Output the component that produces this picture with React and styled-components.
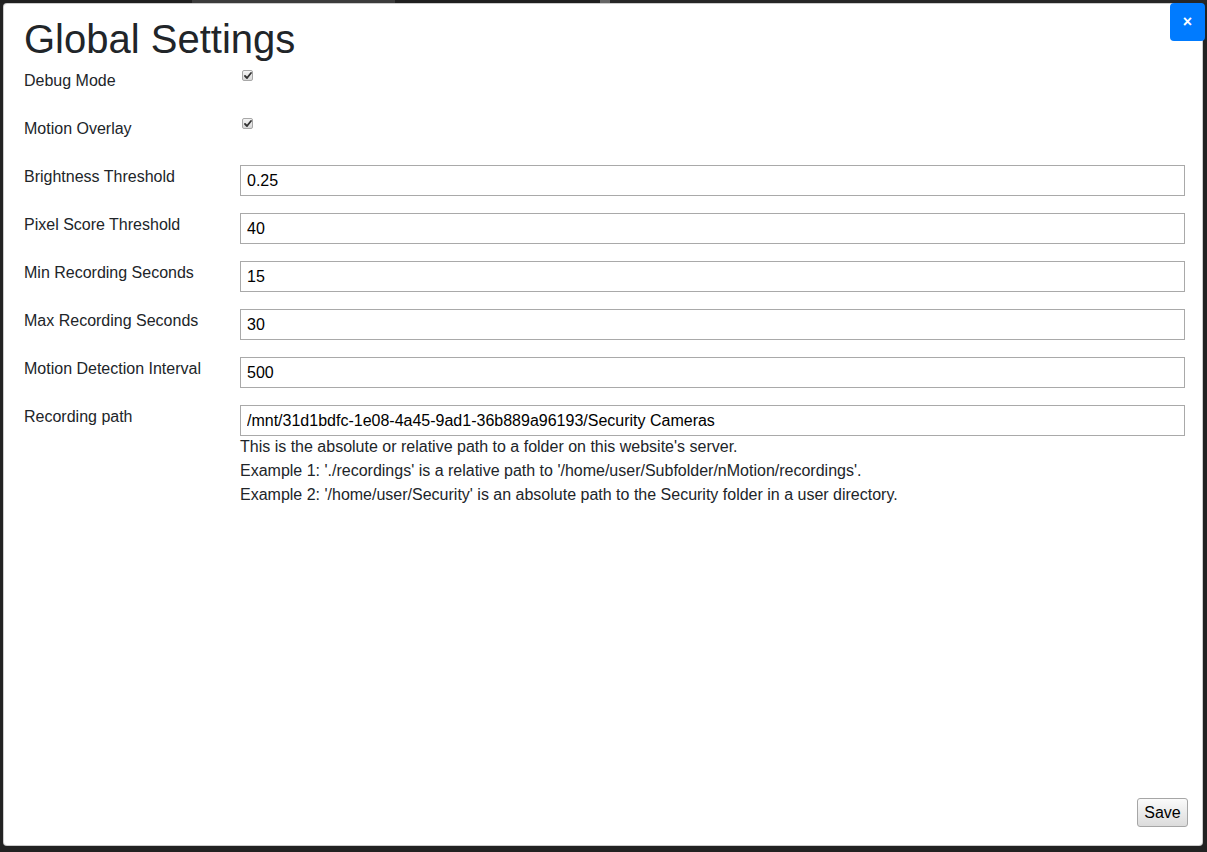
import React from "react";
import styled, { createGlobalStyle } from "styled-components";

const GlobalStyle = createGlobalStyle`
  html, body {
    margin: 0;
    padding: 0;
  }
  body {
    background-color: #222;
    font-family: "Liberation Sans", Arial, sans-serif;
    color: #212529;
  }
  * {
    box-sizing: border-box;
  }
`;

const Page = styled.div`
  height: 852px;
  padding: 3px 4px 6px 3px;
  background:
    linear-gradient(
        to right,
        #202020 192px,
        #3c3c3c 192px,
        #3c3c3c 395px,
        #202020 395px,
        #202020 600px,
        #666 600px,
        #666 610px,
        #262626 610px
      )
      top left / 100% 3px no-repeat,
    #222;
`;

const Modal = styled.div`
  position: relative;
  height: 100%;
  display: flex;
  flex-direction: column;
  background-color: #fff;
  border: 1px solid rgba(0, 0, 0, 0.2);
  border-radius: 4px;
  padding: 11px 17px 0 20px;
`;

const CloseButton = styled.button`
  position: absolute;
  top: -1px;
  right: -3px;
  width: 35px;
  height: 38px;
  padding: 0;
  border: none;
  border-radius: 4px;
  background-color: #007bff;
  color: #fff;
  font-family: "Liberation Sans", Arial, sans-serif;
  font-size: 16px;
  font-weight: bold;
  line-height: 38px;
  cursor: pointer;
`;

const Title = styled.h1`
  margin: 0 0 4px;
  font-size: 40px;
  font-weight: 400;
  line-height: 48px;
  color: #212529;
`;

const Form = styled.div`
  display: flex;
  flex-direction: column;
`;

const Row = styled.div`
  display: flex;
  min-height: 48px;
`;

const Label = styled.label`
  flex: 0 0 216px;
  padding-top: 2px;
  font-size: 16px;
  line-height: 24px;
`;

const Field = styled.div`
  flex: 1;
  display: flex;
  flex-direction: column;
`;

const HiddenInput = styled.input`
  position: absolute;
  opacity: 0;
  width: 0;
  height: 0;
  margin: 0;
`;

const CheckWrap = styled.span`
  position: relative;
  display: inline-flex;
  align-self: flex-start;
  margin: 3px 0 0 2px;
`;

const CheckBox = styled.span`
  display: inline-flex;
  align-items: center;
  justify-content: center;
  width: 11px;
  height: 11px;
  border: 1px solid #a7a7a7;
  border-radius: 2px;
  background: linear-gradient(#f4f4f4, #d8d8d8);
`;

const TextInput = styled.input`
  margin-top: 2px;
  height: 31px;
  width: 100%;
  padding: 0 6px;
  border: 1px solid #a9a9a9;
  border-radius: 0;
  font-family: "Liberation Sans", Arial, sans-serif;
  font-size: 16px;
  color: #000;
  background-color: #fff;
  outline: none;
`;

const HelpText = styled.div`
  display: flex;
  flex-direction: column;
  margin-top: -1px;
`;

const HelpLine = styled.p`
  margin: 0;
  height: 24px;
  font-size: 16px;
  line-height: 24px;
  color: #212529;
`;

const Footer = styled.div`
  margin-top: auto;
  display: flex;
  justify-content: flex-end;
  padding: 0 0 18px;
  margin-right: -3px;
`;

const SaveButton = styled.button`
  width: 51px;
  height: 29px;
  padding: 0;
  border: 1px solid #a6a6a6;
  border-radius: 3px;
  background: linear-gradient(#fbfbfb, #dcdcdc);
  font-family: "Liberation Sans", Arial, sans-serif;
  font-size: 16px;
  color: #000;
  cursor: pointer;
`;

const Check = ({ checked }) => (
  <CheckWrap>
    <HiddenInput type="checkbox" defaultChecked={checked} />
    <CheckBox>
      {checked && (
        <svg width="8" height="7" viewBox="0 0 8 7">
          <path
            d="M1 4 L3 6 L7 1"
            fill="none"
            stroke="#333"
            strokeWidth="1.8"
            strokeLinecap="round"
            strokeLinejoin="round"
          />
        </svg>
      )}
    </CheckBox>
  </CheckWrap>
);

const App = () => {
  const toggles = [
    { id: "debug", label: "Debug Mode", checked: true },
    { id: "overlay", label: "Motion Overlay", checked: true },
  ];

  const fields = [
    { id: "brightness", label: "Brightness Threshold", value: "0.25" },
    { id: "pixel", label: "Pixel Score Threshold", value: "40" },
    { id: "minrec", label: "Min Recording Seconds", value: "15" },
    { id: "maxrec", label: "Max Recording Seconds", value: "30" },
    { id: "interval", label: "Motion Detection Interval", value: "500" },
  ];

  const help = [
    "This is the absolute or relative path to a folder on this website's server.",
    "Example 1: './recordings' is a relative path to '/home/user/Subfolder/nMotion/recordings'.",
    "Example 2: '/home/user/Security' is an absolute path to the Security folder in a user directory.",
  ];

  return (
    <>
      <GlobalStyle />
      <Page>
        <Modal>
          <CloseButton aria-label="Close">×</CloseButton>
          <Title>Global Settings</Title>
          <Form>
            {toggles.map((t) => (
              <Row key={t.id}>
                <Label>{t.label}</Label>
                <Field>
                  <Check checked={t.checked} />
                </Field>
              </Row>
            ))}
            {fields.map((f) => (
              <Row key={f.id}>
                <Label htmlFor={f.id}>{f.label}</Label>
                <Field>
                  <TextInput id={f.id} type="text" defaultValue={f.value} />
                </Field>
              </Row>
            ))}
            <Row>
              <Label htmlFor="recpath">Recording path</Label>
              <Field>
                <TextInput
                  id="recpath"
                  type="text"
                  defaultValue="/mnt/31d1bdfc-1e08-4a45-9ad1-36b889a96193/Security Cameras"
                />
                <HelpText>
                  {help.map((line, i) => (
                    <HelpLine key={i}>{line}</HelpLine>
                  ))}
                </HelpText>
              </Field>
            </Row>
          </Form>
          <Footer>
            <SaveButton>Save</SaveButton>
          </Footer>
        </Modal>
      </Page>
    </>
  );
};

export default App;
